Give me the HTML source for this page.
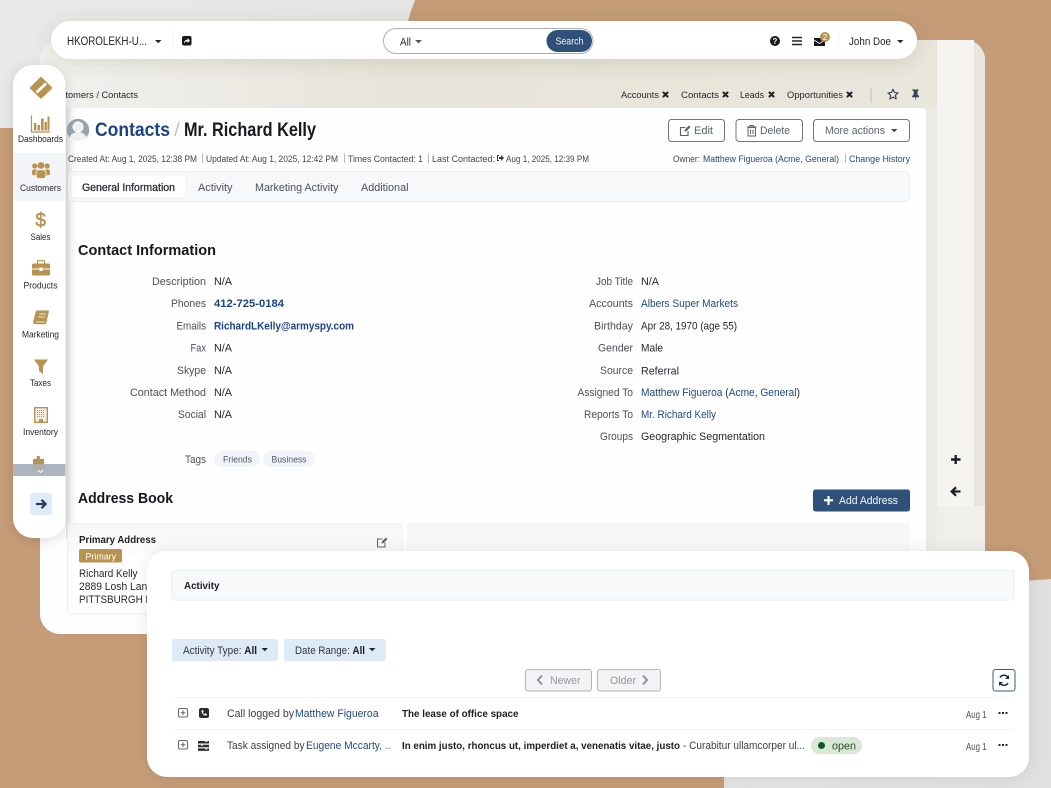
<!DOCTYPE html>
<html lang="en"><head><meta charset="utf-8"><title>Contacts - Mr. Richard Kelly</title>
<style>
html,body{margin:0;padding:0;width:1051px;height:788px;overflow:hidden;background:#e5e5e5}
svg{display:block}
text{font-family:"Liberation Sans",Arial,sans-serif;fill:#33363b;font-size:10px}
.d{fill:#23262b}.g{fill:#4b5058}.l{fill:#1f4a80}.b{font-weight:700;fill:#191b1f}
.h{font-size:15px;font-weight:700;fill:#15171a}
.m{font-size:9.4px;fill:#42464c}
.n{font-size:8.8px;fill:#24272b;text-anchor:middle}
.v{font-size:11px;fill:#25282c}.k{font-size:11px;fill:#4b5058}
.btn{font-size:11px;fill:#5a626d}
.sm{font-size:9.6px;fill:#23262b}
.tan{fill:#b8924f}
</style></head><body>
<svg width="1051" height="788" viewBox="0 0 1051 788" xmlns="http://www.w3.org/2000/svg">
<defs>
<linearGradient id="bgG" x1="0" y1="0" x2="1" y2="0"><stop offset="0" stop-color="#e9e9e9"/><stop offset="1" stop-color="#e0e0e0"/></linearGradient>
<linearGradient id="topG" x1="0" y1="0" x2="1" y2="0"><stop offset="0" stop-color="#f3f2ef"/><stop offset=".08" stop-color="#efeeea"/><stop offset=".4" stop-color="#e7e4da"/><stop offset="1" stop-color="#e9e6dc"/></linearGradient>
<linearGradient id="cardG" x1="0" y1="0" x2="0" y2="1"><stop offset="0" stop-color="#f5f6f7"/><stop offset="1" stop-color="#fcfcfc"/></linearGradient>
<linearGradient id="sideS" x1="0" y1="0" x2="1" y2="0"><stop offset="0" stop-color="#cfcfcf" stop-opacity=".7"/><stop offset="1" stop-color="#ffffff" stop-opacity="0"/></linearGradient>
<filter id="s1" x="-10%" y="-40%" width="120%" height="220%"><feDropShadow dx="0" dy="3" stdDeviation="9" flood-color="#4a4636" flood-opacity=".16"/></filter>
<filter id="s2" x="-40%" y="-10%" width="190%" height="120%"><feDropShadow dx="0" dy="2" stdDeviation="6" flood-color="#000" flood-opacity=".14"/></filter>
<filter id="s3" x="-5%" y="-15%" width="110%" height="130%"><feDropShadow dx="0" dy="0" stdDeviation="8" flood-color="#000" flood-opacity=".09"/></filter>
</defs>

<!-- backdrop -->
<rect width="1051" height="788" fill="url(#bgG)"/>
<path d="M0 128H380C392 128 400 40 408 21Q411 10 415 0H1051V579Q900 590 724 598V788H0Z" fill="#c59c77"/>

<!-- app window -->
<path d="M60 40H965a20 20 0 0 1 20 20V634H60a20 20 0 0 1-20-20V60a20 20 0 0 1 20-20Z" fill="#f0efeb"/>
<path d="M60 40H937V108H40V60a20 20 0 0 1 20-20Z" fill="url(#topG)"/>
<rect x="926" y="108" width="11" height="526" fill="#ecebe6"/>
<rect x="937" y="40" width="37" height="466" fill="#f5f4f0"/>
<path d="M974 40V506H985V60a20 20 0 0 0-11-18Z" fill="#e9e6df"/>

<!-- top bar -->
<rect x="51" y="21" width="866" height="38" rx="19" fill="#fff" filter="url(#s1)"/>
<path d="M40 108H920a6 6 0 0 1 6 6V634H60a20 20 0 0 1-20-20Z" fill="#fefefe"/>
<rect x="66" y="108" width="12" height="430" fill="url(#sideS)"/>
<text x="67" y="45" style="font-size:11.500px;fill:#23262b" textLength="80" lengthAdjust="spacingAndGlyphs">HKOROLEKH-U...</text>
<path d="M155 40h6.500l-3.250 3.200Z" fill="#23262b"/>
<rect x="172" y="31" width="1" height="19" fill="#f3f3f3"/>
<rect x="182" y="36" width="9.500" height="9.500" rx="2" fill="#15171a"/>
<path d="M184 43.500c0-2.600 1.500-3.800 3.500-3.800V38l2.500 2.600-2.500 2.500v-1.700c-1.600 0-2.600.5-3.500 2.100Z" fill="#fff"/>
<rect x="383.500" y="28.500" width="209.500" height="25" rx="12.500" fill="#fff" stroke="#a9b0ba"/>
<text x="400" y="45.500" style="font-size:11px;fill:#23262b" textLength="11" lengthAdjust="spacingAndGlyphs">All</text>
<path d="M415 40h7l-3.500 3.400Z" fill="#555a62"/>
<rect x="546.500" y="30" width="45.500" height="22" rx="11" fill="#2f5078"/>
<text x="555.500" y="44.500" style="font-size:10px;fill:#f2f5f9" textLength="28" lengthAdjust="spacingAndGlyphs">Search</text>
<circle cx="775" cy="41" r="5" fill="#15171a"/>
<text x="775" y="44" text-anchor="middle" style="font-size:8px;font-weight:700;fill:#fff">?</text>
<path d="M792 37.500h10M792 41h10M792 44.500h10" stroke="#23262b" stroke-width="1.500"/>
<path d="M814 38h11v8h-11Z" fill="#15171a"/>
<path d="M814 40l5.500 3.500 5.500-3.500" fill="none" stroke="#fff" stroke-width=".8"/>
<circle cx="825" cy="37" r="5" fill="#b8924f"/>
<text x="825" y="40" text-anchor="middle" style="font-size:8px;fill:#fff">2</text>
<rect x="838" y="31" width="1" height="19" fill="#f3f3f3"/>
<text x="849" y="45" style="font-size:11.300px;fill:#23262b" textLength="42" lengthAdjust="spacingAndGlyphs">John Doe</text>
<path d="M897 40h6.500l-3.250 3.200Z" fill="#23262b"/>

<!-- breadcrumb + open tabs -->
<text x="49" y="98" class="sm" textLength="89" lengthAdjust="spacingAndGlyphs">Customers / Contacts</text>
<text x="621" y="98" class="sm" textLength="38" lengthAdjust="spacingAndGlyphs">Accounts</text>
<text x="681" y="98" class="sm" textLength="38" lengthAdjust="spacingAndGlyphs">Contacts</text>
<text x="740" y="98" class="sm" textLength="24" lengthAdjust="spacingAndGlyphs">Leads</text>
<text x="787" y="98" class="sm" textLength="56" lengthAdjust="spacingAndGlyphs">Opportunities</text>
<g stroke="#1d1f23" stroke-width="2" stroke-linecap="round">
<path d="M663.500 92.500l4 4M667.500 92.500l-4 4M723.500 92.500l4 4M727.500 92.500l-4 4M769.500 92.500l4 4M773.500 92.500l-4 4M847.500 92.500l4 4M851.500 92.500l-4 4"/>
</g>
<rect x="870.500" y="88" width="1.300" height="15" fill="#c9c8c2"/>
<path d="M893 89.200l1.500 3.300 3.600.4-2.700 2.400.8 3.600-3.200-1.900-3.200 1.900.8-3.600-2.700-2.400 3.600-.4Z" fill="none" stroke="#3c4250" stroke-width="1.100" stroke-linejoin="round"/>
<path d="M912 89.500h6.500v1.200l-1 .6v3l1.600 2v1h-3l-.5 3.300-.5-3.300h-3v-1l1.600-2v-3l-1-.6Z" fill="#34445c"/>

<!-- page heading -->
<circle cx="78" cy="130" r="11.200" fill="#9ba2af"/>
<circle cx="78" cy="127" r="5" fill="#eef0f3" stroke="#fff" stroke-width="1"/>
<path d="M70 137.500c1.400-3.600 4.400-5 8-5s6.600 1.400 8 5a10 10 0 0 1-16 0Z" fill="#eef0f3" stroke="#fff" stroke-width=".8"/>
<text x="95" y="136" style="font-size:19px;font-weight:700;fill:#1b4480" textLength="75" lengthAdjust="spacingAndGlyphs">Contacts</text>
<text x="174" y="136" style="font-size:19px;fill:#c3c6cb" textLength="6" lengthAdjust="spacingAndGlyphs">/</text>
<text x="184" y="136" style="font-size:19px;font-weight:700;fill:#17191c" textLength="132" lengthAdjust="spacingAndGlyphs">Mr. Richard Kelly</text>

<!-- action buttons -->
<g fill="#fff" stroke="#6b7583" stroke-width="1">
<rect x="668.500" y="119.500" width="56" height="22" rx="3"/>
<rect x="736" y="119.500" width="66.500" height="22" rx="3"/>
<rect x="813.500" y="119.500" width="96" height="22" rx="3"/>
</g>
<path d="M688 131v4.500h-7.500v-8h5" fill="none" stroke="#59626e" stroke-width="1.100"/>
<path d="M684.500 131.500l.4-2 4-4 1.600 1.600-4 4Z" fill="#59626e"/>
<text x="694" y="134" class="btn" textLength="19" lengthAdjust="spacingAndGlyphs">Edit</text>
<path d="M748 127.500h7.500v8.500h-7.500ZM747 127h9.500M750 127v-1.500h3.500v1.500M750.500 129.500v4.500M753 129.500v4.500" fill="none" stroke="#59626e" stroke-width="1"/>
<text x="760" y="134" class="btn" textLength="30" lengthAdjust="spacingAndGlyphs">Delete</text>
<text x="825" y="134" class="btn" textLength="60" lengthAdjust="spacingAndGlyphs">More actions</text>
<path d="M891 129h6.500l-3.250 3.200Z" fill="#3f4650"/>

<!-- meta row -->
<text x="68" y="162" class="m" textLength="129" lengthAdjust="spacingAndGlyphs">Created At: Aug 1, 2025, 12:38 PM</text>
<rect x="202" y="153.500" width="1" height="9.500" fill="#b9bdc3"/>
<text x="206" y="162" class="m" textLength="132" lengthAdjust="spacingAndGlyphs">Updated At: Aug 1, 2025, 12:42 PM</text>
<rect x="344" y="153.500" width="1" height="9.500" fill="#b9bdc3"/>
<text x="348" y="162" class="m" textLength="75" lengthAdjust="spacingAndGlyphs">Times Contacted: 1</text>
<rect x="428" y="153.500" width="1" height="9.500" fill="#b9bdc3"/>
<text x="432" y="162" class="m" textLength="63" lengthAdjust="spacingAndGlyphs">Last Contacted:</text>
<path d="M499 155.500h-1.500v5h1.500" fill="none" stroke="#33363b" stroke-width=".9"/>
<path d="M499 157h2v-2l3 3-3 3v-2h-2Z" fill="#33363b"/>
<text x="506" y="162" class="m" textLength="83" lengthAdjust="spacingAndGlyphs">Aug 1, 2025, 12:39 PM</text>
<text x="673" y="162" class="m" textLength="27" lengthAdjust="spacingAndGlyphs">Owner:</text>
<text x="703" y="162" class="m" style="fill:#1f4a80" textLength="136" lengthAdjust="spacingAndGlyphs">Matthew Figueroa (Acme, General)</text>
<rect x="845" y="153.500" width="1" height="9.500" fill="#b9bdc3"/>
<text x="849" y="162" class="m" style="fill:#1f4a80" textLength="61" lengthAdjust="spacingAndGlyphs">Change History</text>

<!-- tabs -->
<rect x="68" y="171.500" width="842" height="30" rx="6" fill="#f6f8fa" stroke="#eceef0"/>
<rect x="71" y="175" width="115" height="23" rx="4" fill="#fff" stroke="#eff0f2"/>
<text x="82" y="191" style="font-size:11px;fill:#2c2f34;stroke:#2c2f34;stroke-width:.3" textLength="93" lengthAdjust="spacingAndGlyphs">General Information</text>
<text x="198" y="191" class="k" textLength="34.500" lengthAdjust="spacingAndGlyphs">Activity</text>
<text x="255" y="191" class="k" textLength="83.500" lengthAdjust="spacingAndGlyphs">Marketing Activity</text>
<text x="361" y="191" class="k" textLength="47.500" lengthAdjust="spacingAndGlyphs">Additional</text>

<!-- contact information -->
<text x="78" y="255" class="h" textLength="138" lengthAdjust="spacingAndGlyphs">Contact Information</text>

<text x="152" y="285" class="k" textLength="54" lengthAdjust="spacingAndGlyphs">Description</text><text x="214" y="285" class="v" textLength="18" lengthAdjust="spacingAndGlyphs">N/A</text>
<text x="171" y="307" class="k" textLength="35" lengthAdjust="spacingAndGlyphs">Phones</text><text x="214" y="307" class="v" style="fill:#1b4480;font-weight:700" textLength="70" lengthAdjust="spacingAndGlyphs">412-725-0184</text>
<text x="176.500" y="329.500" class="k" textLength="29.500" lengthAdjust="spacingAndGlyphs">Emails</text><text x="214" y="329.500" class="v" style="fill:#1b4480;font-weight:700" textLength="140" lengthAdjust="spacingAndGlyphs">RichardLKelly@armyspy.com</text>
<text x="190.500" y="351.500" class="k" textLength="15.500" lengthAdjust="spacingAndGlyphs">Fax</text><text x="214" y="351.500" class="v" textLength="18" lengthAdjust="spacingAndGlyphs">N/A</text>
<text x="177" y="374" class="k" textLength="29" lengthAdjust="spacingAndGlyphs">Skype</text><text x="214" y="374" class="v" textLength="18" lengthAdjust="spacingAndGlyphs">N/A</text>
<text x="130" y="396" class="k" textLength="76" lengthAdjust="spacingAndGlyphs">Contact Method</text><text x="214" y="396" class="v" textLength="18" lengthAdjust="spacingAndGlyphs">N/A</text>
<text x="178" y="418" class="k" textLength="28" lengthAdjust="spacingAndGlyphs">Social</text><text x="214" y="418" class="v" textLength="18" lengthAdjust="spacingAndGlyphs">N/A</text>

<text x="185" y="463" class="k" textLength="21" lengthAdjust="spacingAndGlyphs">Tags</text>
<rect x="214" y="451" width="46" height="16" rx="8" fill="#f0f4f9"/><rect x="263" y="451" width="52" height="16" rx="8" fill="#f0f4f9"/>
<text x="223" y="462.500" style="font-size:9.600px;fill:#4d5866" textLength="29" lengthAdjust="spacingAndGlyphs">Friends</text>
<text x="271.500" y="462.500" style="font-size:9.600px;fill:#4d5866" textLength="35" lengthAdjust="spacingAndGlyphs">Business</text>

<text x="596" y="285" class="k" textLength="37" lengthAdjust="spacingAndGlyphs">Job Title</text><text x="641" y="285" class="v" textLength="18" lengthAdjust="spacingAndGlyphs">N/A</text>
<text x="589" y="307" class="k" textLength="44" lengthAdjust="spacingAndGlyphs">Accounts</text><text x="641" y="307" class="v" style="fill:#1f4a80" textLength="97" lengthAdjust="spacingAndGlyphs">Albers Super Markets</text>
<text x="594" y="329.500" class="k" textLength="39" lengthAdjust="spacingAndGlyphs">Birthday</text><text x="641" y="329.500" class="v" textLength="96" lengthAdjust="spacingAndGlyphs">Apr 28, 1970 (age 55)</text>
<text x="598" y="351.500" class="k" textLength="35" lengthAdjust="spacingAndGlyphs">Gender</text><text x="641" y="351.500" class="v" textLength="22" lengthAdjust="spacingAndGlyphs">Male</text>
<text x="600" y="374" class="k" textLength="33" lengthAdjust="spacingAndGlyphs">Source</text><text x="641" y="374.500" class="v" textLength="38" lengthAdjust="spacingAndGlyphs">Referral</text>
<text x="577.500" y="396" class="k" textLength="55.500" lengthAdjust="spacingAndGlyphs">Assigned To</text>
<text x="641" y="396" class="v" textLength="159" lengthAdjust="spacingAndGlyphs"><tspan style="fill:#1f4a80">Matthew Figueroa</tspan> (<tspan style="fill:#1f4a80">Acme</tspan>, <tspan style="fill:#1f4a80">General</tspan>)</text>
<text x="584" y="418" class="k" textLength="49" lengthAdjust="spacingAndGlyphs">Reports To</text><text x="641" y="418" class="v" style="fill:#1f4a80" textLength="75" lengthAdjust="spacingAndGlyphs">Mr. Richard Kelly</text>
<text x="600" y="440" class="k" textLength="33" lengthAdjust="spacingAndGlyphs">Groups</text><text x="641" y="440" class="v" textLength="124" lengthAdjust="spacingAndGlyphs">Geographic Segmentation</text>

<!-- address book -->
<text x="78" y="503" class="h" textLength="95" lengthAdjust="spacingAndGlyphs">Address Book</text>
<rect x="813" y="489.500" width="97" height="22" rx="2.500" fill="#2f5078"/>
<path d="M824 500.300h9M828.500 496v9" stroke="#fff" stroke-width="2.200"/>
<text x="839" y="504" style="font-size:11px;fill:#f4f7fb" textLength="59" lengthAdjust="spacingAndGlyphs">Add Address</text>
<rect x="67.500" y="523.500" width="334.500" height="90.500" rx="3" fill="#fff" stroke="#eceef0"/>
<rect x="68" y="524" width="334" height="30" fill="url(#cardG)"/>
<rect x="407" y="523" width="503" height="40" rx="3" fill="url(#cardG)"/>
<text x="79" y="543" style="font-size:10.500px;font-weight:700;fill:#1c1e22" textLength="77" lengthAdjust="spacingAndGlyphs">Primary Address</text>
<rect x="79" y="549" width="43" height="13.500" rx="2" fill="#b8924f"/>
<text x="85.500" y="559.500" style="font-size:9.600px;fill:#fff" textLength="30.500" lengthAdjust="spacingAndGlyphs">Primary</text>
<path d="M385 542.500v4.500h-7.500v-8h5" fill="none" stroke="#59626e" stroke-width="1"/>
<path d="M381.500 543.500l.4-2 4-4 1.600 1.600-4 4Z" fill="#59626e"/>
<text x="79" y="577" class="v" textLength="58.500" lengthAdjust="spacingAndGlyphs">Richard Kelly</text>
<text x="79" y="590" class="v" textLength="74" lengthAdjust="spacingAndGlyphs">2889 Losh Lane</text>
<text x="79" y="603" class="v" textLength="79" lengthAdjust="spacingAndGlyphs">PITTSBURGH PA</text>

<!-- right rail icons -->
<path d="M951 459.500h9.500M955.700 455v9" stroke="#1e2024" stroke-width="2.400"/>
<path d="M960.500 491.500h-8M956 487.300l-4.300 4.200 4.300 4.200" fill="none" stroke="#1e2024" stroke-width="2.300"/>

<!-- sidebar -->
<rect x="13" y="65" width="52.500" height="473" rx="20" fill="#fff" filter="url(#s2)"/>
<rect x="13" y="153" width="52.500" height="48" fill="#f3f5f9"/>
<path d="M41 77.500l10.500 10.500-10.500 10-10.500-10Z" fill="#b8924f" stroke="#b8924f" stroke-linejoin="round" stroke-width="1.500"/>
<path d="M35.500 91.500l9.500-9 2 2-9.500 9Z" fill="#fff"/>
<!-- dashboards -->
<path d="M31.500 115.500v16.500h18.500" fill="none" stroke="#b8924f" stroke-width="1.200"/>
<path d="M34 123h2.400v7.500H34ZM37.500 125h2.600v5.500h-2.600ZM41 118.500h2.600v12H41ZM44.500 122h2.400v8.500h-2.400ZM47.500 116.500h2V130.500h-2Z" fill="#b8924f"/>
<text x="40.500" y="142" class="n" textLength="45" lengthAdjust="spacingAndGlyphs">Dashboards</text>
<!-- customers -->
<g fill="#b8924f"><circle cx="41" cy="165.500" r="3.400"/><circle cx="34.800" cy="166" r="2.600"/><circle cx="47.200" cy="166" r="2.600"/>
<rect x="32" y="169.500" width="6.500" height="5.800" rx="2"/><rect x="43.500" y="169.500" width="6.500" height="5.800" rx="2"/>
<rect x="36" y="169.800" width="10" height="8.700" rx="3" stroke="#f3f5f9" stroke-width=".8"/></g>
<text x="40.500" y="191" class="n" textLength="41" lengthAdjust="spacingAndGlyphs">Customers</text>
<!-- sales -->
<text x="40.700" y="226.500" text-anchor="middle" style="font-size:19px;fill:#b8924f;stroke:#b8924f;stroke-width:.5">$</text>
<text x="40.500" y="240" class="n" textLength="20" lengthAdjust="spacingAndGlyphs">Sales</text>
<!-- products -->
<path d="M33.500 263.500h15a1.500 1.500 0 0 1 1.500 1.500v3.500h-7.500v-1h-3v1H32V265a1.500 1.500 0 0 1 1.500-1.500ZM32 269.500h7.500v1.500h3v-1.500H50v4.500a1.500 1.500 0 0 1-1.500 1.500h-15A1.500 1.500 0 0 1 32 274Z" fill="#b8924f"/>
<path d="M37.500 263.500v-1.800a1 1 0 0 1 1-1h5a1 1 0 0 1 1 1v1.800" fill="none" stroke="#b8924f" stroke-width="1.200"/>
<text x="40.500" y="288.500" class="n" textLength="34" lengthAdjust="spacingAndGlyphs">Products</text>
<!-- marketing -->
<path d="M37.500 310.500h10.500c.8 0 1.100.6.900 1.300l-2.800 11.700c-.2.600-.6.800-1.200.8H35.500c-1.800 0-2.800-1.400-2.200-3.400l2.400-9c.2-.8.900-1.400 1.800-1.400Z" fill="#b8924f"/>
<path d="M39 314h7M38.200 317h7M35.500 322h9" stroke="#fff" stroke-width=".8"/>
<text x="40.500" y="337.500" class="n" textLength="37" lengthAdjust="spacingAndGlyphs">Marketing</text>
<!-- taxes -->
<path d="M34 359.500h14l-5 7v7.500l-4-3v-4.500Z" fill="#b8924f"/>
<text x="40.500" y="386" class="n" textLength="21" lengthAdjust="spacingAndGlyphs">Taxes</text>
<!-- inventory -->
<rect x="34.700" y="407.700" width="12.600" height="14.600" fill="#f5efe3" stroke="#b8924f" stroke-width="1.400"/>
<path d="M37 410.500h8M37 412.500h8M37 414.500h8M37 416.500h8" stroke="#b8924f" stroke-width="1" stroke-dasharray="1 1"/>
<rect x="39" y="419" width="4" height="3" fill="#b8924f"/>
<text x="40.500" y="435" class="n" textLength="35" lengthAdjust="spacingAndGlyphs">Inventory</text>
<!-- puzzle + scroll band -->
<path d="M33 459h3.500v-1.500a1.800 1.800 0 1 1 3.600 0V459h4v5H33Z" fill="#b8924f"/>
<rect x="13" y="464" width="52.500" height="12" fill="#aeb5c0"/>
<path d="M33 464h11v3l3 .5-3 1.500v2h-7.500l-3.500-2Z" fill="#b8924f" opacity=".2"/>
<path d="M37.800 470l2.700 2.500 2.700-2.500" fill="none" stroke="#fff" stroke-width="1"/>
<rect x="30" y="493" width="22" height="22" rx="2.500" fill="#dfeaf7"/>
<path d="M36 504h9M41.500 499.800l4.200 4.200-4.200 4.200" fill="none" stroke="#2b3d63" stroke-width="2.200"/>

<!-- activity card -->
<rect x="147" y="551" width="882" height="226" rx="20" fill="#fff" filter="url(#s3)"/>
<rect x="172" y="570.500" width="842" height="29.500" rx="3" fill="#f8f9fa" stroke="#eceef0"/>
<text x="184" y="589" style="font-size:10.500px;font-weight:700;fill:#1c1e22" textLength="35.500" lengthAdjust="spacingAndGlyphs">Activity</text>
<rect x="172" y="639" width="106" height="22" rx="2.500" fill="#deeaf6"/>
<rect x="284" y="639" width="102" height="22" rx="2.500" fill="#deeaf6"/>
<text x="183" y="654" style="font-size:11px;fill:#33363b" textLength="74" lengthAdjust="spacingAndGlyphs">Activity Type: <tspan style="font-weight:700;fill:#1c1e22">All</tspan></text>
<path d="M261.500 648h6.500l-3.250 3.200Z" fill="#23262b"/>
<text x="295" y="654" style="font-size:11px;fill:#33363b" textLength="70" lengthAdjust="spacingAndGlyphs">Date Range: <tspan style="font-weight:700;fill:#1c1e22">All</tspan></text>
<path d="M369 648h6.500l-3.250 3.200Z" fill="#23262b"/>

<rect x="525.500" y="669.500" width="66" height="21.500" rx="2.500" fill="#f2f3f4" stroke="#b2b6bb"/>
<rect x="597.500" y="669.500" width="63" height="21.500" rx="2.500" fill="#f2f3f4" stroke="#b2b6bb"/>
<path d="M542 675.500l-4 4.500 4 4.500" fill="none" stroke="#8d9196" stroke-width="2"/>
<text x="550" y="684" style="font-size:11px;fill:#94989d" textLength="30.500" lengthAdjust="spacingAndGlyphs">Newer</text>
<text x="610" y="684" style="font-size:11px;fill:#94989d" textLength="26" lengthAdjust="spacingAndGlyphs">Older</text>
<path d="M643 675.500l4 4.500-4 4.500" fill="none" stroke="#8d9196" stroke-width="2"/>
<rect x="993" y="669.500" width="22" height="21.500" rx="2.500" fill="#fff" stroke="#3f5a7a"/>
<path d="M1008.500 678.500a4.700 4.700 0 0 0-8.500-1M999.500 682a4.700 4.700 0 0 0 8.500 1" fill="none" stroke="#1d2c40" stroke-width="1.500"/>
<path d="M1009 675v4h-4ZM999 686v-4h4Z" fill="#1d2c40"/>

<rect x="172" y="697" width="842" height="1" fill="#f4f5f6"/>
<rect x="172" y="729" width="842" height="1" fill="#f4f5f6"/>

<!-- row 1 -->
<rect x="178.500" y="708.500" width="9" height="8.500" rx="1.500" fill="#fff" stroke="#5f6670"/>
<path d="M180.500 712.700h5M183 710.300v5" stroke="#5f6670"/>
<rect x="199" y="708" width="10" height="10" rx="2" fill="#2a2d33"/>
<path d="M201.500 710.500c0 2.800 2 5 4.800 5.200l.7-1.500-1.800-.9-.8.800c-.8-.4-1.300-1-1.500-1.700l.8-.8-.8-1.700Z" fill="#fff"/>
<text x="227" y="717" class="k" style="fill:#3b3f45" textLength="67" lengthAdjust="spacingAndGlyphs">Call logged by</text>
<text x="295" y="717" class="k" style="fill:#1f4a80" textLength="83.500" lengthAdjust="spacingAndGlyphs">Matthew Figueroa</text>
<text x="402" y="717" style="font-size:10.500px;font-weight:700;fill:#1c1e22" textLength="116.500" lengthAdjust="spacingAndGlyphs">The lease of office space</text>
<text x="966" y="718" style="font-size:10.500px;fill:#4b5058" textLength="20.500" lengthAdjust="spacingAndGlyphs">Aug 1</text>
<path d="M998.500 713h2M1002 713h2M1005.500 713h2" stroke="#2a2d33" stroke-width="2"/>

<!-- row 2 -->
<rect x="178.500" y="740.500" width="9" height="8.500" rx="1.500" fill="#fff" stroke="#5f6670"/>
<path d="M180.500 744.700h5M183 742.300v5" stroke="#5f6670"/>
<path d="M198 741h11v2.500h-11ZM198 744.700h11v2.500h-11ZM198 748.400h11v2.500h-11Z" fill="#2a2d33"/>
<path d="M205 741.500h2.500M201 745.200h2M205 749h2.500" stroke="#fff" stroke-width=".8"/>
<text x="227" y="749" class="k" style="fill:#3b3f45" textLength="77.500" lengthAdjust="spacingAndGlyphs">Task assigned by</text>
<text x="306" y="749" class="k" style="fill:#1f4a80" textLength="76" lengthAdjust="spacingAndGlyphs">Eugene Mccarty,</text>
<text x="385" y="749" class="k" textLength="6" lengthAdjust="spacingAndGlyphs">...</text>
<text x="402" y="749" style="font-size:10.500px;font-weight:700;fill:#1c1e22" textLength="278" lengthAdjust="spacingAndGlyphs">In enim justo, rhoncus ut, imperdiet a, venenatis vitae, justo</text>
<text x="683" y="749" class="k" style="fill:#3b3f45" textLength="122" lengthAdjust="spacingAndGlyphs">- Curabitur ullamcorper ul...</text>
<rect x="811" y="737" width="51" height="17" rx="8.500" fill="#d9e9d5"/>
<circle cx="821.500" cy="745.500" r="3.500" fill="#0f5a1f"/>
<text x="832" y="749.500" style="font-size:10.600px;fill:#2c4a33" textLength="24" lengthAdjust="spacingAndGlyphs">open</text>
<text x="966" y="750" style="font-size:10.500px;fill:#4b5058" textLength="20.500" lengthAdjust="spacingAndGlyphs">Aug 1</text>
<path d="M998.500 745h2M1002 745h2M1005.500 745h2" stroke="#2a2d33" stroke-width="2"/>
</svg>
</body></html>
